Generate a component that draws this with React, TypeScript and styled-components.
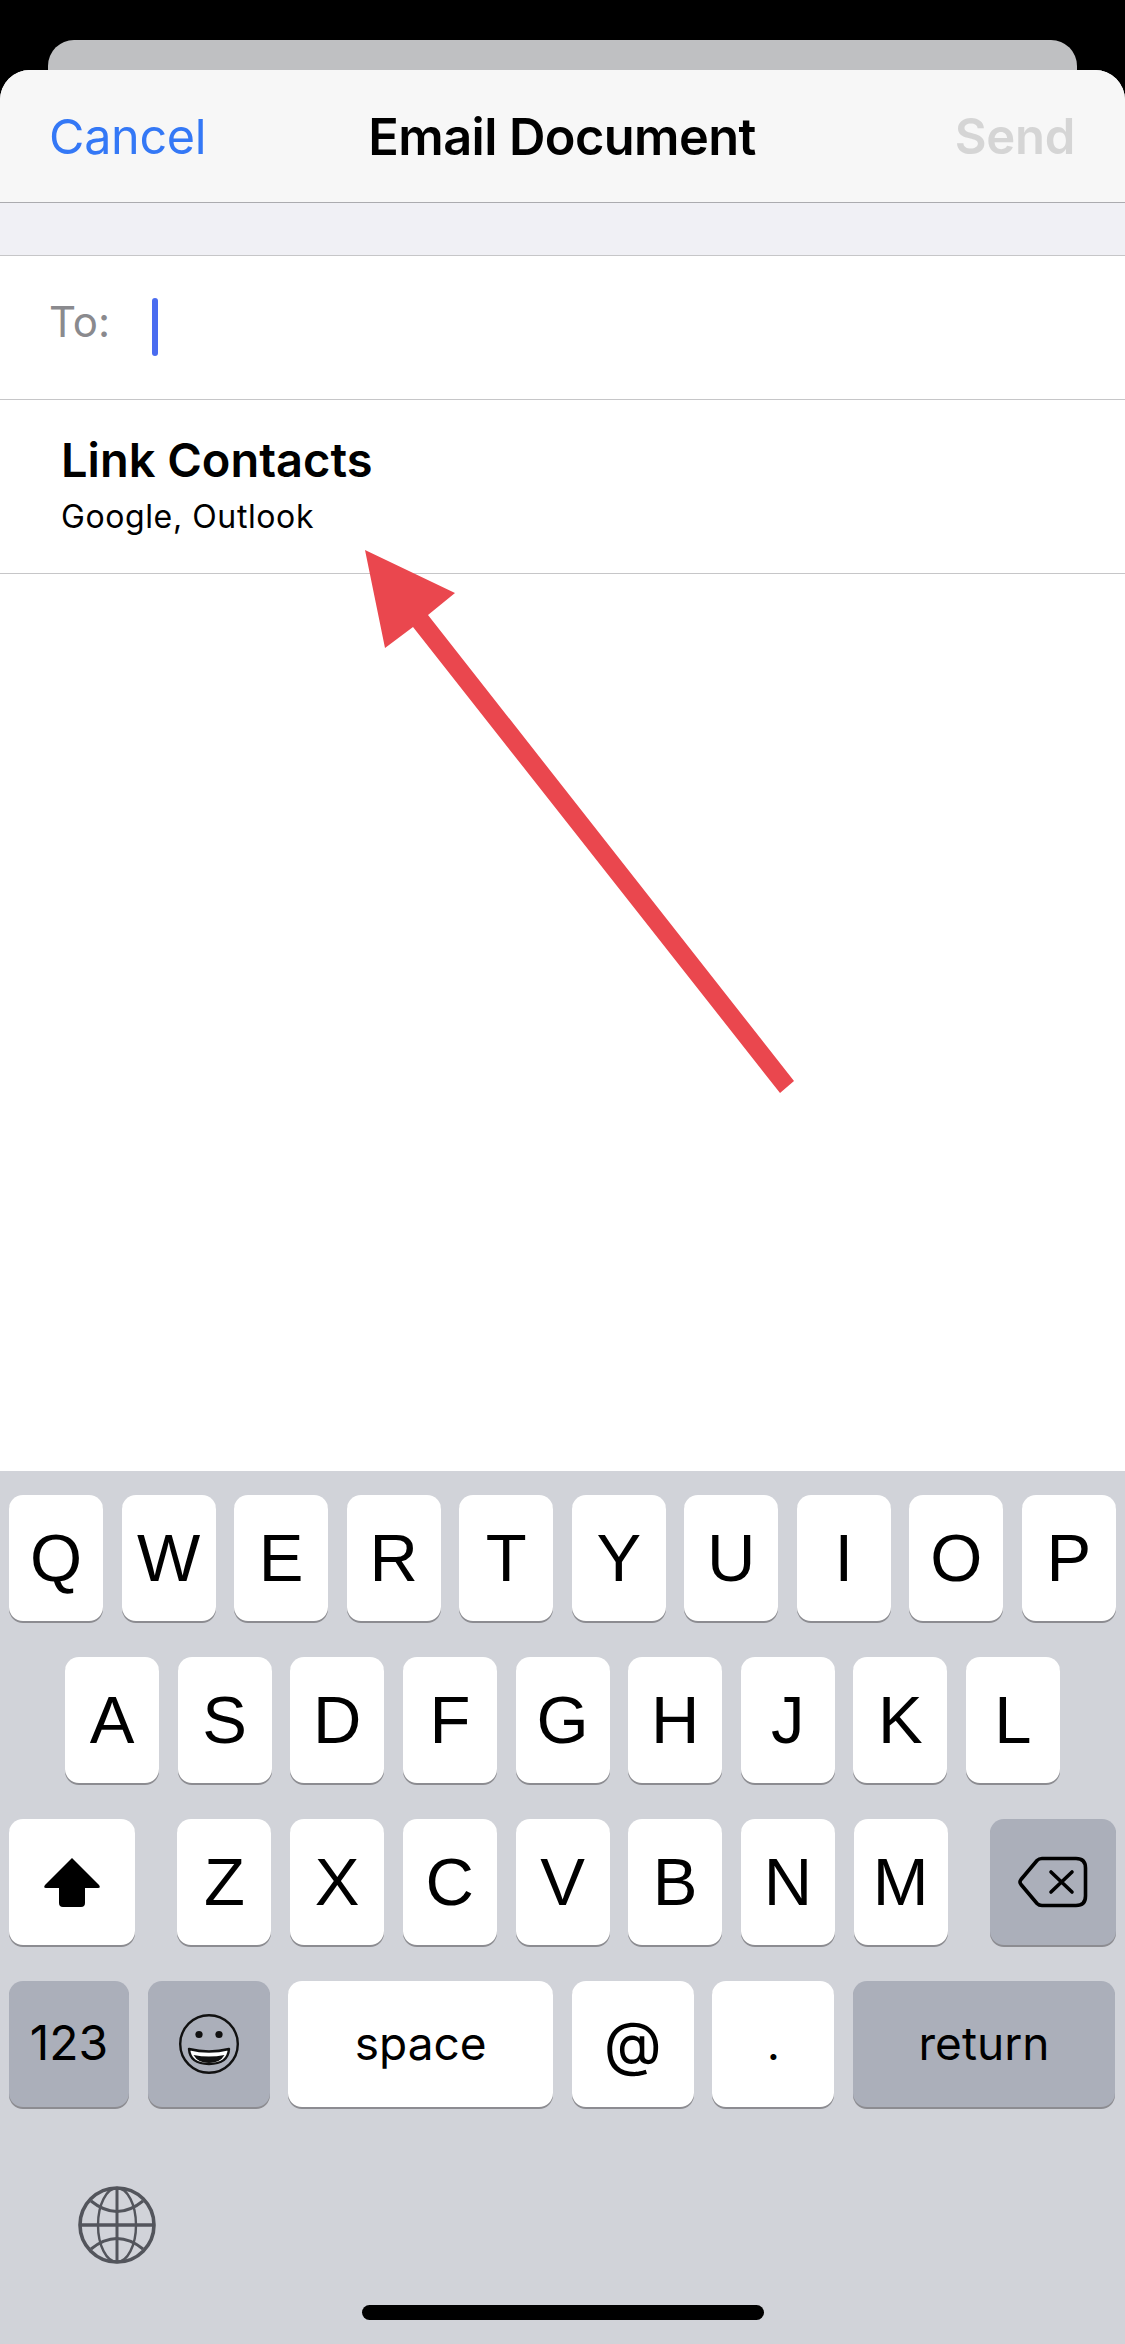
import styled, { createGlobalStyle } from 'styled-components';

const GlobalStyle = createGlobalStyle`
  html, body {
    margin: 0;
    padding: 0;
    background: #000;
  }
  * {
    box-sizing: border-box;
  }
`;

const ROWS = {
  top: ['Q', 'W', 'E', 'R', 'T', 'Y', 'U', 'I', 'O', 'P'],
  middle: ['A', 'S', 'D', 'F', 'G', 'H', 'J', 'K', 'L'],
  bottom: ['Z', 'X', 'C', 'V', 'B', 'N', 'M'],
};

function ShiftIcon() {
  return (
    <svg width="58" height="50" viewBox="0 0 58 50">
      <path
        d="M29 1 L56 28 Q58 31 55 31 L42 31 L42 46 Q42 50 38 50 L20 50 Q16 50 16 46 L16 31 L3 31 Q0 31 2 28 Z"
        fill="#000"
      />
    </svg>
  );
}

function DeleteIcon() {
  return (
    <svg width="70" height="52" viewBox="0 0 70 52" fill="none" stroke="#000">
      <path
        d="M24 2.5 H58 Q67.5 2.5 67.5 12 V40 Q67.5 49.5 58 49.5 H24 Q21 49.5 19 47.5 L3 28.5 Q1 26 3 23.5 L19 4.5 Q21 2.5 24 2.5 Z"
        strokeWidth="3.6"
      />
      <path d="M33 16 L54 36 M54 16 L33 36" strokeWidth="3.6" strokeLinecap="round" />
    </svg>
  );
}

function EmojiIcon() {
  return (
    <svg width="62" height="62" viewBox="0 0 62 62">
      <circle cx="31" cy="31" r="28.8" fill="none" stroke="#111" strokeWidth="2.4" />
      <circle cx="21" cy="21.5" r="3.6" fill="#111" />
      <circle cx="41" cy="21.5" r="3.6" fill="#111" />
      <path
        d="M11 36 Q31 41 51 36 Q50 51 31 51 Q12 51 11 36 Z"
        fill="#fff"
        stroke="#111"
        strokeWidth="2.4"
        strokeLinejoin="round"
      />
      <path d="M15.5 42 Q31 45 46.5 42 Q42 50 31 50 Q20 50 15.5 42 Z" fill="#111" />
    </svg>
  );
}

function GlobeIcon() {
  return (
    <svg width="78" height="78" viewBox="0 0 78 78" fill="none" stroke="#53555c" strokeWidth="2.4">
      <circle cx="39" cy="39" r="37" strokeWidth="3.6" />
      <ellipse cx="39" cy="39" rx="19" ry="37" />
      <path d="M39 2 V76" strokeWidth="3" />
      <path d="M2 39 H76" strokeWidth="3.6" />
      <path d="M13 15 Q39 36 65 15" strokeWidth="3" />
      <path d="M13 63 Q39 42 65 63" strokeWidth="3" />
    </svg>
  );
}

function PointerArrow() {
  return (
    <ArrowOverlay width="450" height="560" viewBox="0 0 450 560">
      <polygon
        points="0,0 90,43 63,65 429,531 415,543 48,77 20,98"
        fill="#ea474e"
      />
    </ArrowOverlay>
  );
}

export default function App() {
  return (
    <Page>
      <GlobalStyle />
      <BackCard />
      <Sheet>
        <NavBar>
          <CancelButton>Cancel</CancelButton>
          <NavTitle>Email Document</NavTitle>
          <SendButton>Send</SendButton>
        </NavBar>
        <GreyBand />
        <ToRow>
          <ToLabel>To:</ToLabel>
          <Caret />
        </ToRow>
        <LinkRow>
          <LinkTitle>Link Contacts</LinkTitle>
          <LinkSubtitle>Google, Outlook</LinkSubtitle>
        </LinkRow>
        <Blank>
          <PointerArrow />
        </Blank>
        <Keyboard>
          <KeyRow $inset={9}>
            {ROWS.top.map(letter => (
              <LetterKey key={letter}>{letter}</LetterKey>
            ))}
          </KeyRow>
          <KeyRow $inset={65}>
            {ROWS.middle.map(letter => (
              <LetterKey key={letter}>{letter}</LetterKey>
            ))}
          </KeyRow>
          <KeyRow $inset={9}>
            <Key $width={126}>
              <ShiftIcon />
            </Key>
            <LetterGroup>
              {ROWS.bottom.map(letter => (
                <LetterKey key={letter}>{letter}</LetterKey>
              ))}
            </LetterGroup>
            <Key $width={126} $dark>
              <DeleteIcon />
            </Key>
          </KeyRow>
          <BottomRow>
            <WordKey $width={120} $dark $size={48}>
              123
            </WordKey>
            <Key $width={122} $dark>
              <EmojiIcon />
            </Key>
            <WordKey $width={265}>space</WordKey>
            <WordKey $width={122} $size={60}>
              @
            </WordKey>
            <WordKey $width={122}>.</WordKey>
            <WordKey $width={262} $dark>
              return
            </WordKey>
          </BottomRow>
          <KeyboardFooter>
            <GlobeSlot>
              <GlobeIcon />
            </GlobeSlot>
            <HomeBar />
          </KeyboardFooter>
        </Keyboard>
      </Sheet>
    </Page>
  );
}

const Page = styled.div`
  width: 1125px;
  height: 2344px;
  padding-top: 40px;
  display: flex;
  flex-direction: column;
  background: #000;
  overflow: hidden;
  font-family: Inter, 'Liberation Sans', sans-serif;
`;

const BackCard = styled.div`
  height: 30px;
  margin: 0 48px;
  flex-shrink: 0;
  background: #bfc0c2;
  border-radius: 26px 26px 0 0;
`;

const Sheet = styled.div`
  flex: 1;
  display: flex;
  flex-direction: column;
  min-height: 0;
  background: #fff;
  border-radius: 30px 30px 0 0;
  overflow: hidden;
`;

const NavBar = styled.div`
  height: 133px;
  flex-shrink: 0;
  padding: 0 50px 0 49px;
  display: grid;
  grid-template-columns: 1fr auto 1fr;
  align-items: center;
  background: #f7f7f7;
  border-bottom: 1px solid #ababaf;
`;

const CancelButton = styled.span`
  font-size: 48.5px;
  letter-spacing: -0.3px;
  color: #3478f6;
`;

const NavTitle = styled.span`
  font-size: 50.5px;
  font-weight: 600;
  letter-spacing: -0.6px;
  color: #000;
`;

const SendButton = styled.span`
  justify-self: end;
  font-size: 49px;
  font-weight: 600;
  letter-spacing: -0.3px;
  color: #d5d5d5;
`;

const GreyBand = styled.div`
  height: 53px;
  flex-shrink: 0;
  background: #f0f0f5;
  border-bottom: 1px solid #c6c6c8;
`;

const ToRow = styled.div`
  height: 144px;
  flex-shrink: 0;
  padding: 0 0 2px 49px;
  display: flex;
  align-items: center;
  gap: 42px;
  border-bottom: 1px solid #c6c6c8;
`;

const ToLabel = styled.span`
  font-size: 42px;
  line-height: 50px;
  margin-top: -10px;
  color: #8a8a8e;
`;

const Caret = styled.span`
  width: 6px;
  height: 58px;
  border-radius: 3px;
  background: #4a6cf0;
`;

const LinkRow = styled.div`
  height: 174px;
  flex-shrink: 0;
  padding: 32px 0 0 61px;
  display: flex;
  flex-direction: column;
  gap: 9px;
  border-bottom: 1px solid #c6c6c8;
`;

const LinkTitle = styled.span`
  font-size: 47px;
  font-weight: 600;
  line-height: 56px;
  color: #000;
`;

const LinkSubtitle = styled.span`
  font-size: 32px;
  letter-spacing: 0.6px;
  line-height: 40px;
  color: #000;
`;

const Blank = styled.div`
  flex: 1;
  position: relative;
  background: #fff;
`;

const ArrowOverlay = styled.svg`
  position: absolute;
  left: 365px;
  top: -24px;
`;

const Keyboard = styled.div`
  height: 873px;
  flex-shrink: 0;
  padding-top: 24px;
  display: flex;
  flex-direction: column;
  gap: 36px;
  background: #d1d3d9;
`;

const KeyRow = styled.div<{ $inset: number }>`
  display: flex;
  justify-content: space-between;
  padding: 0 ${props => props.$inset}px;
`;

const BottomRow = styled.div`
  display: flex;
  justify-content: space-between;
  padding: 0 10px 0 9px;
`;

const LetterGroup = styled.div`
  display: flex;
  gap: 18.7px;
`;

const Key = styled.div<{ $width: number; $dark?: boolean }>`
  width: ${props => props.$width}px;
  height: 126px;
  display: flex;
  align-items: center;
  justify-content: center;
  flex-shrink: 0;
  border-radius: 14px;
  background: ${props => (props.$dark ? '#abafba' : '#fff')};
  box-shadow: 0 2px 0 #8c8c91;
  color: #000;
`;

const LetterKey = styled(Key).attrs({ $width: 94 })`
  padding-bottom: 2px;
  font-family: 'Liberation Sans', Arial, sans-serif;
  font-size: 67px;
  line-height: 1;
`;

const WordKey = styled(Key)<{ $size?: number }>`
  padding-bottom: 3px;
  font-family: Inter, 'Liberation Sans', sans-serif;
  font-size: ${props => props.$size ?? 46}px;
  line-height: 1;
`;

const KeyboardFooter = styled.div`
  flex: 1;
  display: flex;
  flex-direction: column;
  padding: 43px 0 24px;
`;

const GlobeSlot = styled.div`
  height: 78px;
  padding-left: 78px;
`;

const HomeBar = styled.div`
  width: 402px;
  height: 15px;
  margin: 41px auto 0;
  border-radius: 8px;
  background: #000;
`;
